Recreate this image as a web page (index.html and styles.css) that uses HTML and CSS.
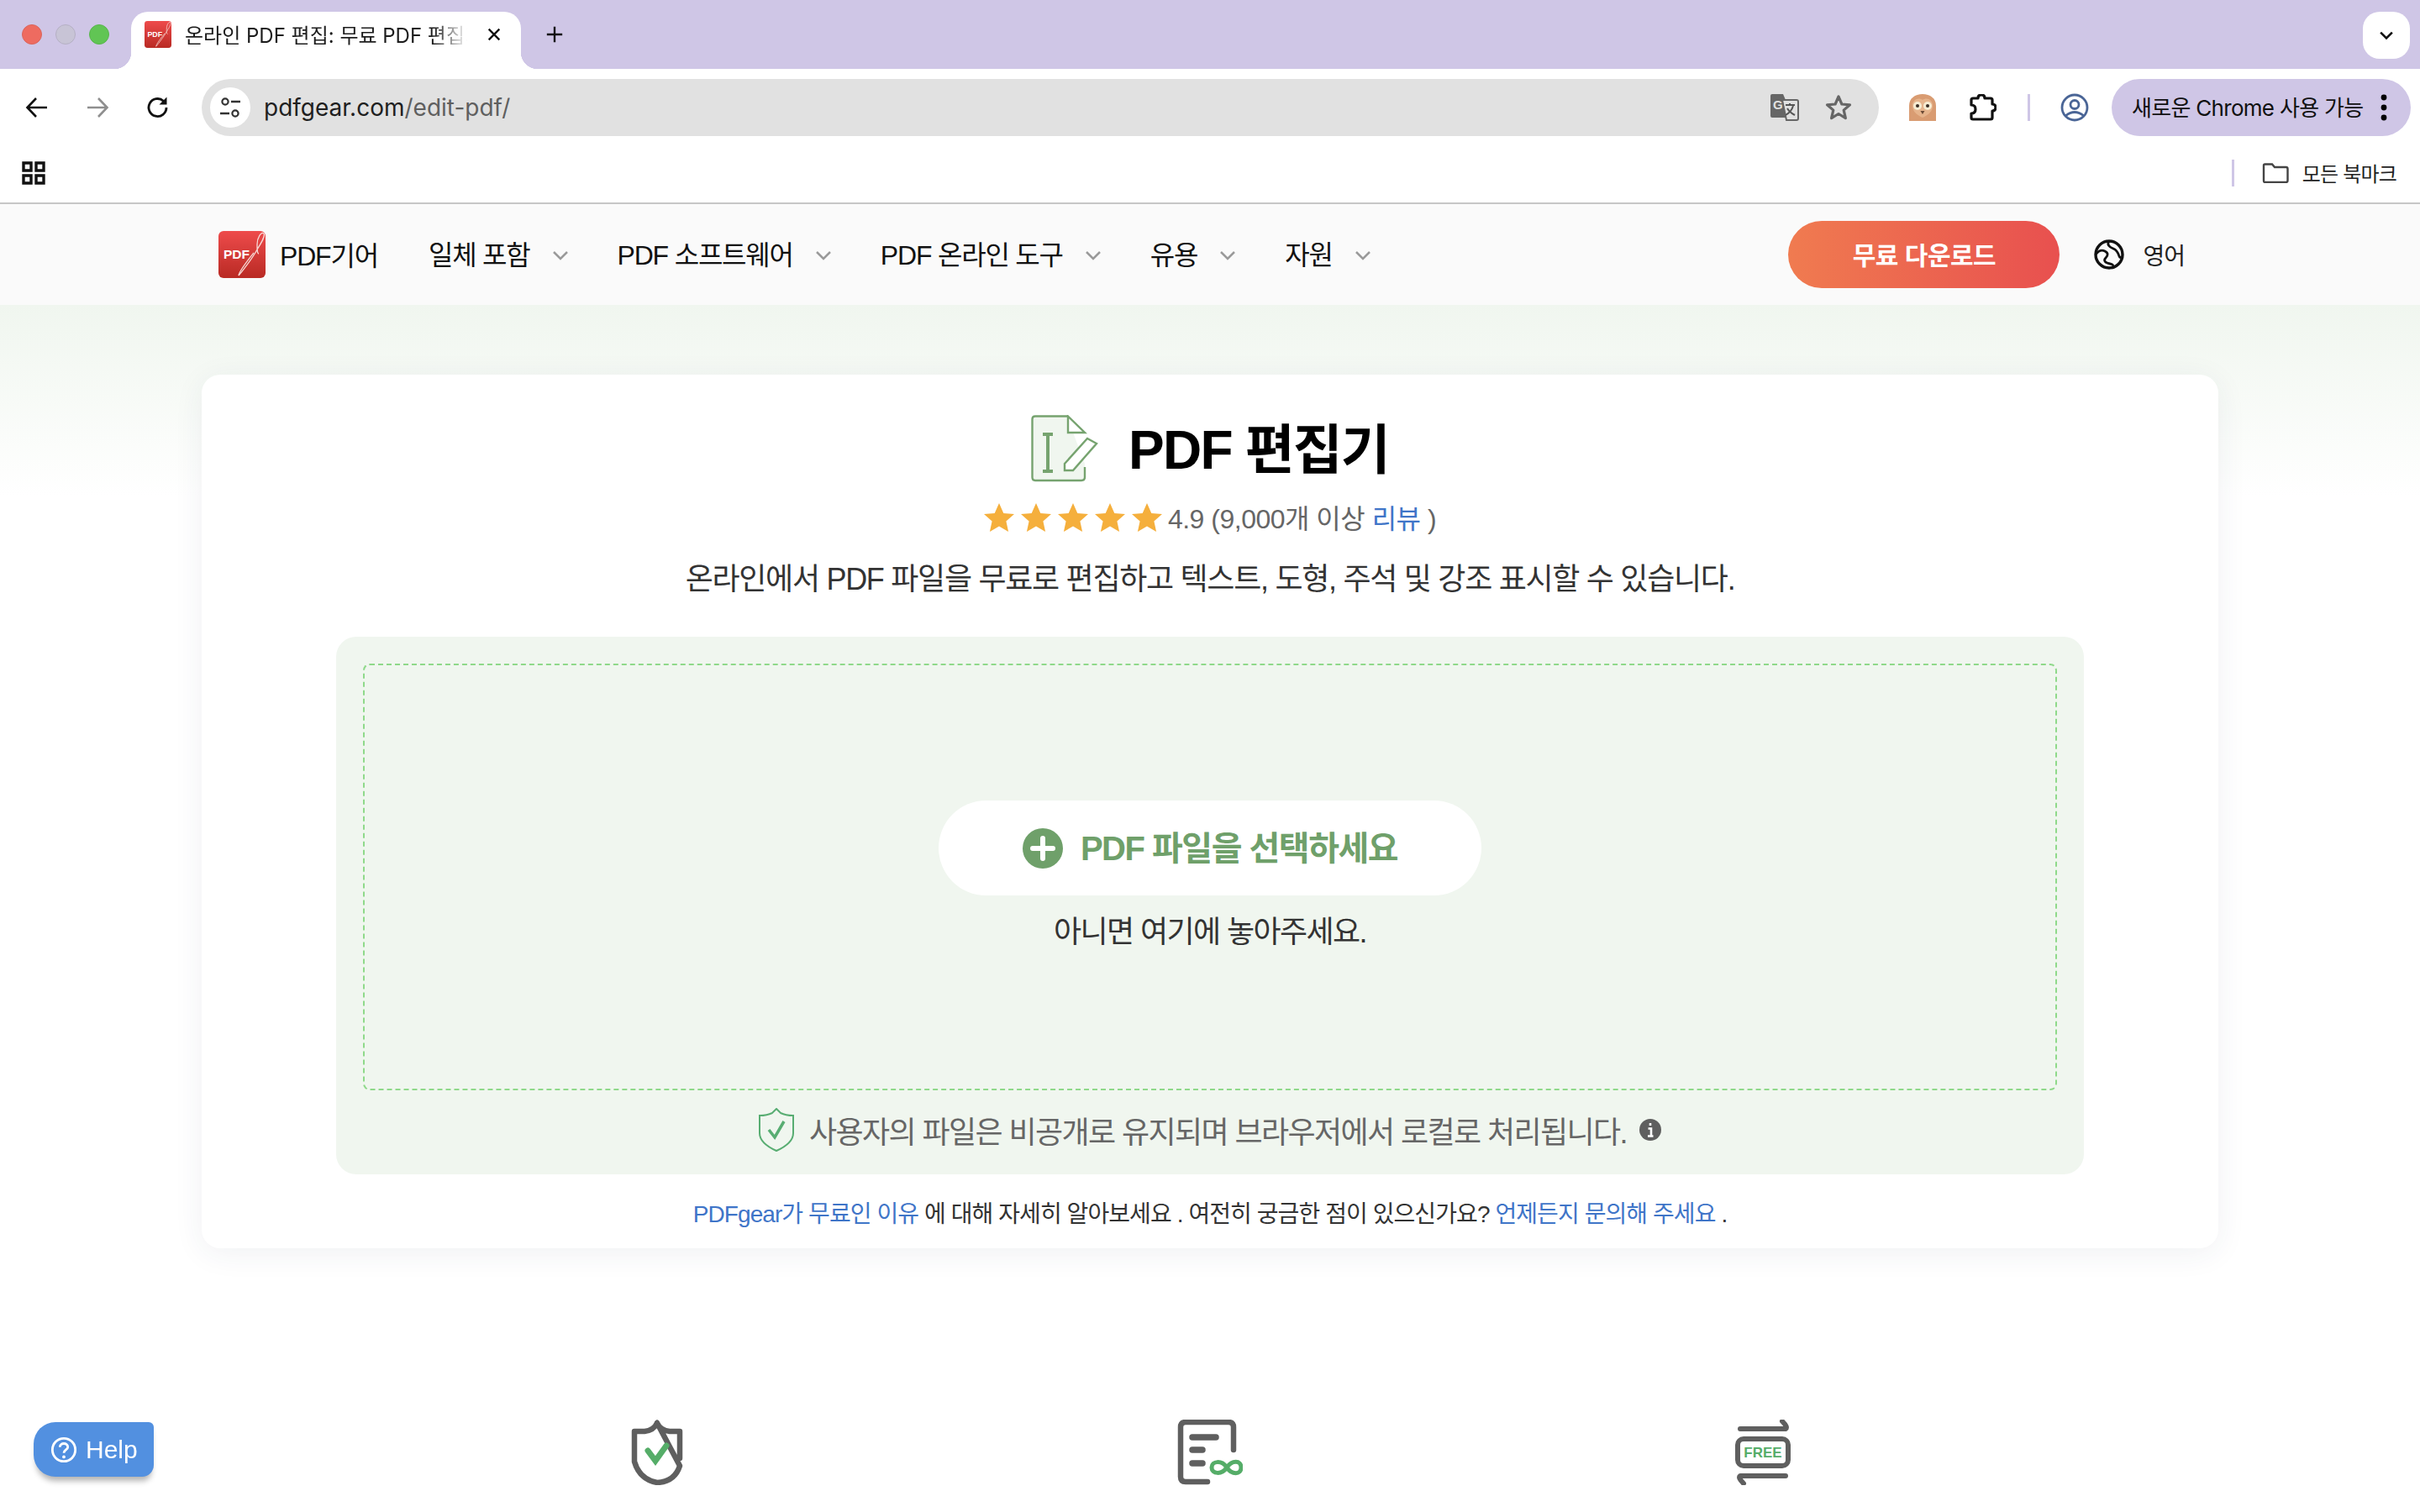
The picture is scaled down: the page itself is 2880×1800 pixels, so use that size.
FILE: index.html
```html
<!DOCTYPE html>
<html lang="ko">
	<head>
		<meta http-equiv="content-type" content="text/html; charset=utf-8" />
		<title>온라인 PDF 편집</title>
		<link rel="stylesheet" href="styles.css">
	</head>

	<body>
		<div class="tabstrip">
			<div class="lights">
				<span class="light light-red"></span>
				<span class="light light-grey"></span>
				<span class="light light-green"></span>
			</div>
			<div class="tab">
				<svg class="favicon" viewBox="0 0 56 56">
					<use href="#pdf-logo" />
				</svg>
				<span class="tab-title">온라인 PDF 편집: 무료 PDF 편집기</span>
				<svg class="tab-close" viewBox="0 0 20 20"><path d="M3 3 17 17M17 3 3 17" stroke="#111" stroke-width="2.6" fill="none" /></svg>
			</div>
			<svg class="tab-plus" viewBox="0 0 24 24"><path d="M12 2V22M2 12H22" stroke="#111" stroke-width="2.6" fill="none" /></svg>
			<div class="tab-search">
				<svg viewBox="0 0 20 14" width="18" height="12"><path d="M2 3 10 11 18 3" stroke="#111" stroke-width="3" fill="none" /></svg>
			</div>
		</div>

		<div class="toolbar">
			<svg class="tool-icon" viewBox="0 0 28 28"><path d="M26 14H3M13 3 2.5 14 13 25" stroke="#111" stroke-width="2.6" fill="none" /></svg>
			<svg class="tool-icon" viewBox="0 0 28 28"><path d="M2 14H25M15 3 25.5 14 15 25" stroke="#8f8f8f" stroke-width="2.6" fill="none" /></svg>
			<svg class="tool-icon" viewBox="0 0 28 28"><path d="M24 14A10.5 10.5 0 1 1 20.5 6.2" stroke="#111" stroke-width="2.8" fill="none" /><path d="M24.5 1.5V10.5H15.5Z" fill="#111" /></svg>
			<div class="urlbar">
				<span class="site-info">
					<svg viewBox="0 0 28 28" width="28" height="28">
						<circle cx="8" cy="7" r="3.6" stroke="#333" stroke-width="2.2" fill="none" />
						<path d="M15 7H26M2 21H13" stroke="#333" stroke-width="2.4" />
						<circle cx="20" cy="21" r="3.6" stroke="#333" stroke-width="2.2" fill="none" />
					</svg>
				</span>
				<span class="url"><span class="url-host">pdfgear.com</span>/edit-pdf/</span>
				<svg class="translate-icon" viewBox="0 0 34 32">
					<path d="M2 0H15L18 7H21L26 28H2Q0 28 0 26V2Q0 0 2 0Z" fill="#666" />
					<path d="M14 7H31Q33 7 33 9V29Q33 31 31 31H19Z" fill="#e1e1e1" stroke="#666" stroke-width="2" />
					<text x="3" y="18" class="translate-g">G</text>
					<path d="M18 13H29M23 11V14M27 14Q25 21 18 25M20 17Q23 22 29 25" stroke="#555" stroke-width="2" fill="none" />
				</svg>
				<svg class="star-icon" viewBox="0 0 32 32"><path d="M16 3 19.9 12 29.5 12.8 22.2 19.1 24.4 28.6 16 23.5 7.6 28.6 9.8 19.1 2.5 12.8 12.1 12Z" stroke="#666" stroke-width="3.2" stroke-linejoin="round" fill="none" /></svg>
			</div>
			<svg class="owl-icon" viewBox="0 0 32 32">
				<path d="M0 32V14C0 5 7 0 16 0S32 5 32 14V32Z" fill="#d99c72" />
				<path d="M16 7C21 3 29 7 28 15C27 23 20 26 16 28C12 26 5 23 4 15C3 7 11 3 16 7Z" fill="#e6b48c" />
				<circle cx="10" cy="14" r="5" fill="#f7ecd2" />
				<circle cx="22" cy="14" r="5" fill="#f7ecd2" />
				<circle cx="10" cy="14" r="2" fill="#3a2d24" />
				<circle cx="22" cy="14" r="2" fill="#3a2d24" />
				<path d="M13.5 20H18.5L16 24Z" fill="#6b4a34" />
			</svg>
			<svg class="puzzle-icon" viewBox="0 0 32 32">
				<path d="M2 7Q2 5 4 5H10Q10 1 14 1T18 5H25Q27 5 27 7V12Q31 12 31 16T27 20V28Q27 30 25 30H4Q2 30 2 28V23Q7 23 7 18T2 13Z" stroke="#111" stroke-width="3.2" stroke-linejoin="round" fill="none" />
			</svg>
			<span class="tool-divider"></span>
			<svg class="profile-icon" viewBox="0 0 34 34">
				<circle cx="17" cy="17" r="15" stroke="#4a6596" stroke-width="2.8" fill="none" />
				<circle cx="17" cy="13.500" r="5" stroke="#4a6596" stroke-width="2.8" fill="none" />
				<path d="M6 27Q17 18 28 27" stroke="#4a6596" stroke-width="2.8" fill="none" />
			</svg>
			<div class="update-pill">
				<span class="update-text">새로운 Chrome 사용 가능</span>
				<svg viewBox="0 0 8 32" width="8" height="32"><circle cx="4" cy="4" r="3.4" /><circle cx="4" cy="16" r="3.4" /><circle cx="4" cy="28" r="3.4" /></svg>
			</div>
		</div>

		<div class="bookmarks">
			<svg class="apps-icon" viewBox="0 0 28 28">
				<path d="M2 2H11V11H2ZM17 2H26V11H17ZM2 17H11V26H2ZM17 17H26V26H17Z" stroke="#111" stroke-width="3.4" fill="none" />
			</svg>
			<span class="bookmarks-divider"></span>
			<svg class="folder-icon" viewBox="0 0 32 24"><path d="M2 3Q2 1.500 3.500 1.500H12L15 5H28.500Q30.500 5 30.500 7V21Q30.500 23 28.500 23H3.500Q2 23 2 21Z" stroke="#444" stroke-width="2.4" fill="none" /></svg>
			<span class="bookmarks-label">모든 북마크</span>
		</div>

		<nav class="site-nav">
			<a class="brand">
				<svg class="brand-logo" viewBox="0 0 56 56">
					<defs>
						<linearGradient id="logo-red" x1="0" y1="0" x2="0" y2="1">
							<stop offset="0" stop-color="#ee4b4b" />
							<stop offset="1" stop-color="#b92a24" />
						</linearGradient>
					</defs>
					<g id="pdf-logo">
						<rect width="56" height="56" rx="6" fill="url(#logo-red)" />
						<text x="6" y="33" class="logo-text">PDF</text>
						<path d="M24 53C30 46 42 30 46 22C51 14 56 6 54 3C51 0 46 8 46 16C46 22 46 27 48 27" stroke="#f7d9d5" stroke-width="1.300" fill="none" />
						<path d="M24 53C25 47 34 36 42 26" stroke="#f7d9d5" stroke-width="1.300" fill="none" />
					</g>
				</svg>
				<span class="brand-name">PDF기어</span>
			</a>
			<a class="nav-item nav-all">일체 포함<svg class="chevron" viewBox="0 0 20 12"><path d="M2 2 10 10 18 2" /></svg></a>
			<a class="nav-item">PDF 소프트웨어<svg class="chevron" viewBox="0 0 20 12"><path d="M2 2 10 10 18 2" /></svg></a>
			<a class="nav-item">PDF 온라인 도구<svg class="chevron" viewBox="0 0 20 12"><path d="M2 2 10 10 18 2" /></svg></a>
			<a class="nav-item">유용<svg class="chevron" viewBox="0 0 20 12"><path d="M2 2 10 10 18 2" /></svg></a>
			<a class="nav-item">자원<svg class="chevron" viewBox="0 0 20 12"><path d="M2 2 10 10 18 2" /></svg></a>
			<a class="download-btn">무료 다운로드</a>
			<svg class="globe-icon" viewBox="0 0 36 36">
				<circle cx="18" cy="18" r="16" stroke="#111" stroke-width="3.400" fill="none" />
				<path d="M2 18C5 14 9 12 13 14S17 19 14 22 13 28 19 29 22 32 23 35M18 2C15 6 18 9 23 11S29 17 30 20 33 21 35 21" stroke="#111" stroke-width="2.800" fill="none" />
			</svg>
			<span class="lang">영어</span>
		</nav>

		<main class="page">
			<section class="card">
				<div class="title-row">
					<svg class="title-icon" viewBox="0 0 80 80">
						<path d="M44 1.500H5Q1.500 1.500 1.500 5V74Q1.500 78 5 78H60Q64 78 64 74V58L50 21Z" fill="#f0f6ef" />
						<path d="M64 62V74Q64 78 60 78H5Q1.500 78 1.500 74V5Q1.500 1.500 5 1.500H44" stroke="#76a36f" stroke-width="2.400" fill="none" />
						<path d="M44 1.500 64 21H44Z" stroke="#76a36f" stroke-width="2.400" fill="#fff" />
						<path d="M14 23H26M20 23V67M14 67H26" stroke="#76a36f" stroke-width="4" fill="none" />
						<path d="M40 58 67 28 78 34 50 66H40Z" stroke="#76a36f" stroke-width="2.400" fill="#fff" />
					</svg>
					<h1 class="title">PDF 편집기</h1>
				</div>
				<div class="rating">
					<span class="stars">
						<svg class="star" viewBox="0 0 36 34"><path id="star-shape" d="M18 0 23.300 11.900 36 13 26.400 21.500 29.100 34 18 27.500 6.900 34 9.600 21.500 0 13 12.700 11.900Z" /></svg>
						<svg class="star" viewBox="0 0 36 34"><use href="#star-shape" /></svg>
						<svg class="star" viewBox="0 0 36 34"><use href="#star-shape" /></svg>
						<svg class="star" viewBox="0 0 36 34"><use href="#star-shape" /></svg>
						<svg class="star" viewBox="0 0 36 34"><use href="#star-shape" /></svg>
					</span>
					<span class="rating-text">4.9 (9,000개 이상 <a class="link">리뷰</a> )</span>
				</div>
				<p class="subtitle">온라인에서 PDF 파일을 무료로 편집하고 텍스트, 도형, 주석 및 강조 표시할 수 있습니다.</p>

				<div class="panel">
					<div class="dropzone">
						<button class="select-btn">
							<svg class="plus-icon" viewBox="0 0 48 48"><circle cx="24" cy="24" r="24" fill="#6fa06a" /><path d="M24 12V36M12 24H36" stroke="#fff" stroke-width="6" stroke-linecap="round" /></svg>
							<span class="select-label">PDF 파일을 선택하세요</span>
						</button>
						<p class="drop-hint">아니면 여기에 놓아주세요.</p>
					</div>
					<div class="privacy">
						<svg class="privacy-shield" viewBox="0 0 42 52">
							<path d="M21 1 26 6Q32 9 41 9V30Q41 42 21 51Q1 42 1 30V9Q10 9 16 6Z" stroke="#58ad72" stroke-width="2" fill="none" />
							<path d="M12 26 19 35 30 16" stroke="#58ad72" stroke-width="3.500" fill="none" />
						</svg>
						<span class="privacy-text">사용자의 파일은 비공개로 유지되며 브라우저에서 로컬로 처리됩니다.</span>
						<svg class="info-icon" viewBox="0 0 26 26"><circle cx="13" cy="13" r="13" fill="#5f5f5f" /><path d="M13 5V8M10.500 11.500H14V20M10 20.500H16.500" stroke="#fff" stroke-width="2.600" fill="none" /></svg>
					</div>
				</div>

				<p class="card-foot"><a class="link">PDFgear가 무료인 이유</a> 에 대해 자세히 알아보세요 . 여전히 궁금한 점이 있으신가요? <a class="link">언제든지 문의해 주세요</a> .</p>
			</section>

			<section class="features">
				<svg class="feature-icon" viewBox="0 0 62 78">
					<path d="M31 4Q35 13 46 14H58V46M58 55Q52 74 31 75Q10 71 4 50V14H16Q27 13 31 4Z" stroke="#5f5f5f" stroke-width="6.500" stroke-linecap="round" stroke-linejoin="round" fill="none" />
					<path d="M20 37 29 49 42 31" stroke="#55ad68" stroke-width="7" stroke-linecap="round" fill="none" />
				</svg>
				<svg class="feature-icon" viewBox="0 0 78 78">
					<path d="M36 74H10Q4 74 4 68V9Q4 3 10 3H61Q67 3 67 9V36" stroke="#5f5f5f" stroke-width="6.500" stroke-linecap="round" fill="none" />
					<path d="M18 21H46M18 36H30M18 52H30" stroke="#5f5f5f" stroke-width="7.500" stroke-linecap="round" />
					<path d="M59 57C53 48 41 49 41 57S53 66 59 57 76 48 76 57 65 66 59 57Z" stroke="#55ad68" stroke-width="5" fill="none" />
				</svg>
				<svg class="feature-icon" viewBox="0 0 66 78">
					<path d="M6 11H60Q63 9 56 2M60 67H6Q3 69 10 76" stroke="#5f5f5f" stroke-width="6" stroke-linecap="round" stroke-linejoin="round" fill="none" />
					<rect x="3" y="23" width="60" height="32" rx="7" stroke="#5f5f5f" stroke-width="6" fill="none" />
					<text x="33" y="45" class="free-text">FREE</text>
				</svg>
			</section>
		</main>

		<a class="help-btn">
			<svg viewBox="0 0 34 34" width="32" height="32">
				<circle cx="17" cy="17" r="14.500" stroke="#fff" stroke-width="3" fill="none" />
				<path d="M12 13.500C12 7.500 22 7.500 22 13.500C22 17 17 17 17 21" stroke="#fff" stroke-width="3" fill="none" />
				<circle cx="17" cy="26" r="2" fill="#fff" />
			</svg>
			Help
		</a>
	</body>
</html>
```

FILE: styles.css
```css
* {
	box-sizing: border-box;
}

html, body {
	margin: 0;
	height: 100%;
	overflow: hidden;
	background: #fff;
}

body {
	font-family: "Liberation Sans", "Noto Sans CJK KR", sans-serif;
	color: #222;
}

a {
	text-decoration: none;
}

/* browser chrome */
.tabstrip {
	display: flex;
	align-items: flex-start;
	height: 82px;
	padding-top: 14px;
	background: #cfc6e6;
}

.lights {
	display: flex;
	gap: 16px;
	width: 156px;
	padding: 15px 0 0 26px;
}

.light {
	width: 24px;
	height: 24px;
	border-radius: 50%;
}

.light-red { background: #ee6b60; border: 1px solid #d9655c; }
.light-grey { background: #c8c4d6; border: 1px solid #b5b0c4; }
.light-green { background: #61c554; border: 1px solid #58b54c; }

.tab {
	position: relative;
	display: flex;
	align-items: center;
	width: 464px;
	height: 68px;
	padding: 0 24px 14px 16px;
	background: #fff;
	border-radius: 20px 20px 0 0;
}

.tab::before,
.tab::after {
	content: "";
	position: absolute;
	bottom: 0;
	width: 20px;
	height: 20px;
}

.tab::before {
	left: -20px;
	background: radial-gradient(circle at 0 0, #cfc6e6 20px, #fff 20.500px);
}

.tab::after {
	right: -20px;
	background: radial-gradient(circle at 100% 0, #cfc6e6 20px, #fff 20.500px);
}

.favicon {
	width: 32px;
	height: 32px;
	flex: none;
}

.tab-title {
	flex: none;
	width: 336px;
	margin-left: 16px;
	padding-bottom: 2px;
	font-family: "Inter", "Noto Sans CJK KR", sans-serif;
	font-size: 24px;
	white-space: nowrap;
	overflow: hidden;
	color: #1c1c1c;
	-webkit-mask-image: linear-gradient(to right, #000 88%, transparent 100%);
	mask-image: linear-gradient(to right, #000 88%, transparent 100%);
}

.tab-close {
	width: 18px;
	height: 18px;
	margin-left: 23px;
	flex: none;
}

.tab-plus {
	width: 22px;
	height: 22px;
	margin: 16px 0 0 29px;
}

.tab-search {
	display: flex;
	align-items: center;
	justify-content: center;
	width: 56px;
	height: 56px;
	margin-left: auto;
	margin-right: 12px;
	background: #fff;
	border-radius: 20px;
}

.toolbar {
	position: relative;
	display: flex;
	align-items: center;
	height: 80px;
	padding: 12px 13px 0 30px;
	background: #fff;
	border-radius: 18px 18px 0 0;
	margin-top: 0;
}

.tool-icon {
	width: 28px;
	height: 28px;
	margin-right: 44px;
	flex: none;
}

.tool-icon:nth-child(3) {
	margin-right: 38px;
}

.urlbar {
	display: flex;
	align-items: center;
	width: 1996px;
	height: 68px;
	margin-left: 0;
	padding: 0 32px 0 10px;
	background: #e1e1e1;
	border-radius: 34px;
	flex: none;
}

.site-info {
	display: flex;
	align-items: center;
	justify-content: center;
	width: 48px;
	height: 48px;
	background: #fff;
	border-radius: 50%;
	flex: none;
}

.url {
	margin-left: 16px;
	font-family: "Inter", sans-serif;
	font-size: 28px;
	color: #5f5f5f;
}

.url-host {
	color: #1f1f1f;
}

.translate-icon {
	width: 34px;
	height: 32px;
	margin-left: auto;
}

.translate-g {
	font-family: "Liberation Sans", sans-serif;
	font-size: 15px;
	font-weight: bold;
	fill: #e1e1e1;
}

.star-icon {
	width: 32px;
	height: 32px;
	margin-left: 31px;
}

.owl-icon {
	width: 32px;
	height: 32px;
	margin-left: 36px;
	flex: none;
}

.puzzle-icon {
	width: 32px;
	height: 32px;
	margin-left: 40px;
	flex: none;
}

.tool-divider {
	width: 3px;
	height: 32px;
	margin-left: 37px;
	background: #cfc6e6;
	flex: none;
}

.profile-icon {
	width: 34px;
	height: 34px;
	margin-left: 36px;
	flex: none;
}

.update-pill {
	display: flex;
	align-items: center;
	justify-content: space-between;
	width: 356px;
	height: 68px;
	margin-left: 27px;
	padding: 0 28px 0 24px;
	background: #cfc6e6;
	border-radius: 34px;
	flex: none;
}

.update-text {
	padding-bottom: 3px;
	font-family: "Inter", "Noto Sans CJK KR", sans-serif;
	font-size: 26px;
	letter-spacing: -0.7px;
	white-space: nowrap;
	color: #111;
}

.bookmarks {
	display: flex;
	align-items: center;
	height: 81px;
	padding: 8px 28px 0 26px;
	background: #fff;
	border-bottom: 2px solid #c6c6c6;
}

.apps-icon {
	width: 28px;
	height: 28px;
}

.bookmarks-divider {
	width: 3px;
	height: 32px;
	margin-left: auto;
	background: #cfc6e6;
}

.folder-icon {
	width: 32px;
	height: 24px;
	margin-left: 33px;
}

.bookmarks-label {
	margin-left: 16px;
	font-family: "Inter", "Noto Sans CJK KR", sans-serif;
	font-size: 24px;
	letter-spacing: -0.8px;
	color: #222;
}

/* site nav */
.site-nav {
	display: flex;
	align-items: center;
	height: 120px;
	padding-left: 260px;
	background: #fafafa;
	font-size: 32px;
	letter-spacing: -1.2px;
	color: #111;
}

.brand {
	display: flex;
	align-items: center;
	gap: 17px;
}

.brand-logo {
	width: 56px;
	height: 56px;
}

.brand-name {
	padding-bottom: 3px;
}

.logo-text {
	font-family: "Liberation Sans", sans-serif;
	font-size: 15.500px;
	font-weight: bold;
	letter-spacing: 0;
	fill: #fff;
}

.nav-item {
	display: flex;
	align-items: center;
	margin-left: 58px;
	padding-bottom: 5px;
	white-space: nowrap;
}

.nav-all {
	margin-left: 60px;
}

.chevron {
	width: 20px;
	height: 12px;
	margin-left: 26px;
	margin-top: 7px;
}

.chevron path {
	stroke: #9a9a9a;
	stroke-width: 2.500;
	fill: none;
}

.download-btn {
	display: flex;
	align-items: center;
	justify-content: center;
	width: 323px;
	height: 80px;
	margin-left: auto;
	padding-bottom: 2px;
	border-radius: 40px;
	background: linear-gradient(to right, #f07b50, #e8504f);
	color: #fff;
	font-size: 30px;
	font-weight: bold;
	letter-spacing: -0.5px;
}

.globe-icon {
	width: 36px;
	height: 36px;
	margin-left: 41px;
}

.lang {
	margin-left: 22px;
	margin-right: 280px;
	font-size: 28px;
	letter-spacing: -1px;
	color: #222;
}

/* main card */
.page {
	height: 1437px;
	padding-top: 83px;
	background: linear-gradient(to bottom, #f0f6ef 0, #fff 228px);
}

.card {
	width: 2400px;
	height: 1040px;
	margin: 0 auto;
	padding-top: 48px;
	background: #fff;
	border-radius: 22px;
	box-shadow: 0 6px 36px rgba(40, 50, 80, 0.07);
}

.title-row {
	display: flex;
	align-items: center;
	justify-content: center;
	gap: 36px;
	height: 80px;
}

.title-icon {
	width: 80px;
	height: 80px;
}

.title {
	margin: 0;
	padding-bottom: 8px;
	font-size: 64px;
	font-weight: bold;
	letter-spacing: -1.8px;
	color: #000;
}

.rating {
	display: flex;
	align-items: center;
	justify-content: center;
	gap: 7px;
	height: 40px;
	margin-top: 22px;
	font-size: 32px;
	color: #666;
}

.rating-text {
	letter-spacing: -0.5px;
	padding-bottom: 2px;
}

.stars {
	display: flex;
	gap: 8px;
}

.star {
	width: 36px;
	height: 34px;
	fill: #f5af3c;
}

.link {
	color: #3f75c8;
}

.subtitle {
	margin: 29px 0 0;
	height: 50px;
	line-height: 50px;
	text-align: center;
	font-size: 36px;
	letter-spacing: -1.3px;
	color: #333;
}

.panel {
	width: 2080px;
	height: 640px;
	margin: 43px auto 0;
	padding: 32px 32px 0;
	background: #f0f6ef;
	border-radius: 24px;
}

.dropzone {
	display: flex;
	flex-direction: column;
	align-items: center;
	height: 508px;
	padding-top: 161px;
	border: 2px dashed #8fd98a;
	border-radius: 8px;
}

.select-btn {
	display: flex;
	align-items: center;
	justify-content: center;
	gap: 21px;
	width: 646px;
	height: 113px;
	border: 0;
	border-radius: 57px;
	background: #fff;
	font-family: inherit;
	font-size: 40px;
	font-weight: bold;
	letter-spacing: -1.5px;
	color: #6fa06a;
}

.select-label {
	padding-bottom: 5px;
}

.plus-icon {
	width: 48px;
	height: 48px;
}

.drop-hint {
	margin: 19px 0 0;
	font-size: 36px;
	line-height: 50px;
	letter-spacing: -1.6px;
	color: #333;
}

.privacy {
	display: flex;
	align-items: center;
	justify-content: center;
	gap: 18px;
	height: 94px;
	font-size: 36px;
	color: #666;
}

.privacy-text {
	margin-right: -3px;
	letter-spacing: -1.6px;
}

.privacy-shield {
	width: 42px;
	height: 52px;
}

.info-icon {
	width: 26px;
	height: 26px;
	flex: none;
}

.card-foot {
	margin: 28px 0 0;
	text-align: center;
	font-size: 28px;
	line-height: 40px;
	letter-spacing: -0.92px;
	color: #333;
}

.features {
	display: grid;
	grid-template-columns: repeat(3, 658px);
	justify-content: center;
	justify-items: center;
	margin-top: 204px;
}

.feature-icon {
	height: 78px;
}

.free-text {
	font-family: "Liberation Sans", sans-serif;
	font-size: 17px;
	font-weight: bold;
	text-anchor: middle;
	fill: #55ad68;
}

.help-btn {
	position: fixed;
	left: 40px;
	top: 1693px;
	display: flex;
	align-items: center;
	gap: 10px;
	width: 143px;
	height: 65px;
	padding-left: 20px;
	border-radius: 26px 6px 14px 26px;
	background: #5290e0;
	box-shadow: 0 8px 7px -3px rgba(0, 0, 0, 0.3);
	color: #fff;
	font-size: 30px;
}
```
